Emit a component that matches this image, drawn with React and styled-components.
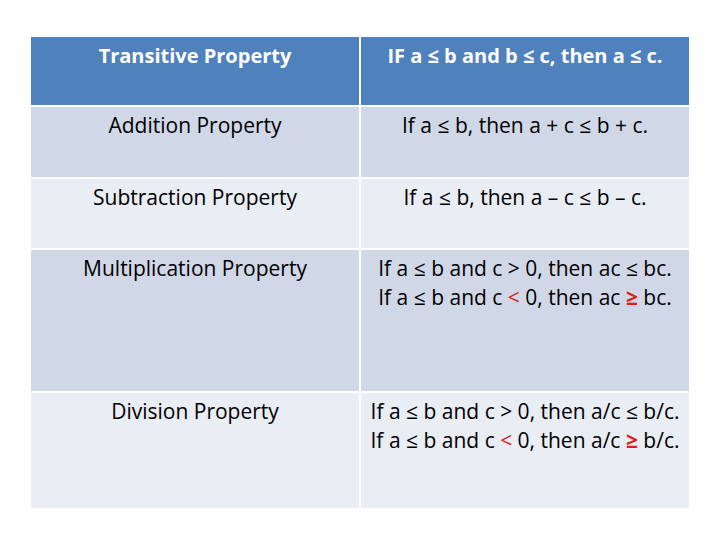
import React from 'react';
import styled, { createGlobalStyle } from 'styled-components';

const GlobalStyle = createGlobalStyle`
  body {
    margin: 0;
    background: #ffffff;
    font-family: "Open Sans", "Noto Sans", sans-serif;
  }
`;

const Page = styled.div`
  width: 720px;
  height: 540px;
  padding: 37px 0 0 31px;
  box-sizing: border-box;
`;

const Table = styled.div`
  display: grid;
  grid-template-columns: 328px 328px;
  grid-template-rows: 68px 70px 69px 141px 115px;
  gap: 2px;
  width: 658px;
`;

const Cell = styled.div`
  background: ${props => props.bg};
  color: ${props => (props.head ? '#ffffff' : '#000000')};
  font-weight: ${props => (props.head ? 700 : 400)};
  font-size: ${props => (props.head ? '20px' : '21px')};
  line-height: 29px;
  text-align: center;
  padding-top: 4px;
  box-sizing: border-box;
  font-variant-ligatures: none;
`;

const Red = styled.span`
  color: #e41b17;
  font-weight: ${props => (props.bold ? 700 : 400)};
`;

const colors = ['#4f81bd', '#d0d8e8', '#e9edf4', '#d0d8e8', '#e9edf4'];

const rows = [
  ['Transitive Property', <>IF a ≤ b and b ≤ c, then a ≤ c.</>],
  ['Addition Property', <>If a ≤ b, then a + c ≤ b + c.</>],
  ['Subtraction Property', <>If a ≤ b, then a – c ≤ b – c.</>],
  [
    'Multiplication Property',
    <>
      If a ≤ b and c &gt; 0, then ac ≤ bc.
      <br />
      If a ≤ b and c <Red>&lt;</Red> 0, then ac <Red bold>≥</Red> bc.
    </>,
  ],
  [
    'Division Property',
    <>
      If a ≤ b and c &gt; 0, then a/c ≤ b/c.
      <br />
      If a ≤ b and c <Red>&lt;</Red> 0, then a/c <Red bold>≥</Red> b/c.
    </>,
  ],
];

export default function App() {
  return (
    <Page>
      <GlobalStyle />
      <Table>
        {rows.map(([name, rule], i) => (
          <React.Fragment key={name}>
            <Cell bg={colors[i]} head={i === 0}>{name}</Cell>
            <Cell bg={colors[i]} head={i === 0}>{rule}</Cell>
          </React.Fragment>
        ))}
      </Table>
    </Page>
  );
}
